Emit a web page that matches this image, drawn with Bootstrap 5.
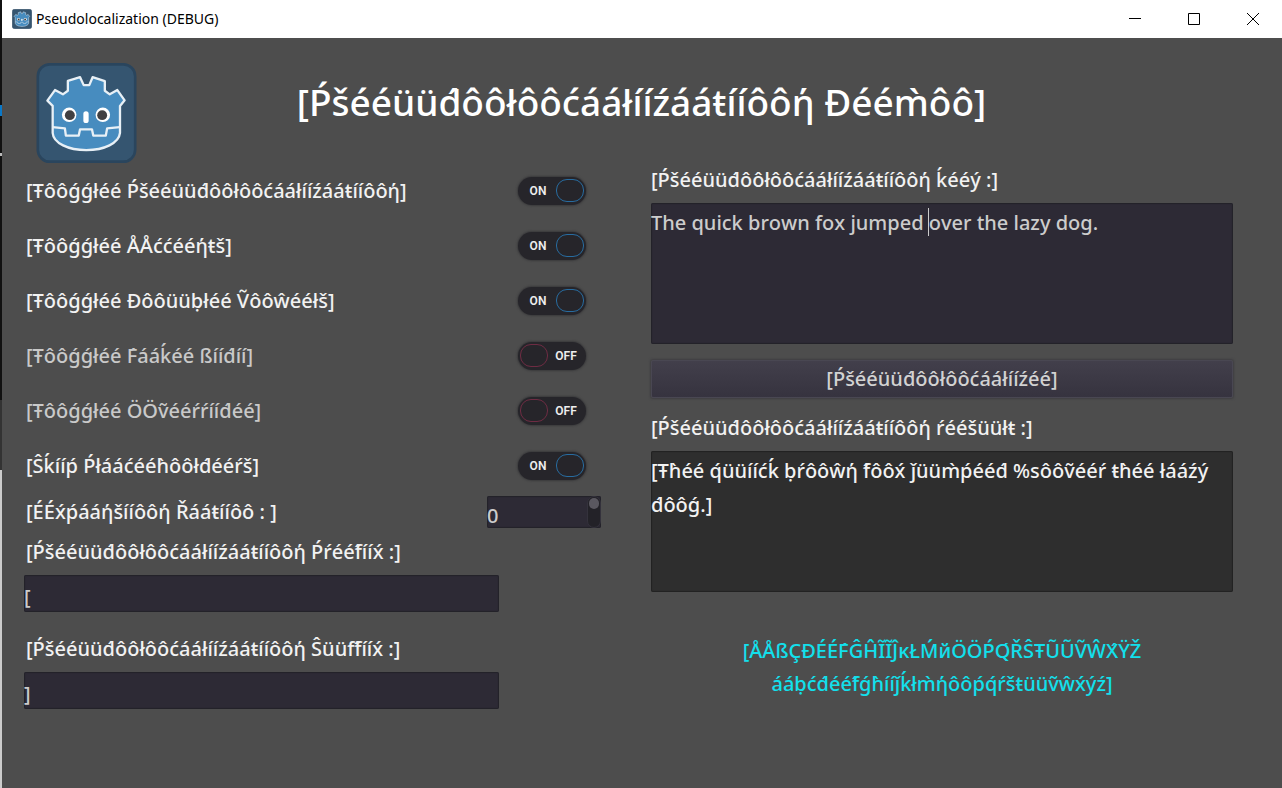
<!DOCTYPE html>
<html lang="en">
<head>
<meta charset="utf-8">
<meta name="viewport" content="width=device-width, initial-scale=1">
<title>Pseudolocalization (DEBUG)</title>
<link href="https://cdn.jsdelivr.net/npm/bootstrap@5.3.0/dist/css/bootstrap.min.css" rel="stylesheet">
<style>
  body {
    font-family: "Noto Sans", sans-serif;
    font-size: 20px;
    line-height: 32px;
    color: #f2f2f2;
    background: #4d4d4d;
  }
  /* sliver of the desktop that shows beside the window */
  .desktop-edge {
    min-height: 100vh;
    padding-left: 2px;
    background: linear-gradient(#111 0 105px, #0a78c8 105px 116px, #111 116px 153px, #bbb 153px 156px, #111 156px 400px, #333 400px 470px, #ccc 470px) left / 2px 100% no-repeat;
  }
  .titlebar { height: 38px; background: #fff; color: #000; font: 14px/20px "Noto Sans", sans-serif; padding-left: 10px; }
  .win-btn { width: 59px; height: 38px; border: 0; background: none; padding: 0; line-height: 0; color: #000; }
  .stage { padding: 25px 49px 0 22px; }
  .masthead { display: grid; grid-template-columns: 100px 1fr 86px; padding: 0 0 0 12px; }
  .masthead h1 { font-size: 37px; line-height: 52px; font-weight: 500; color: #fff; padding-top: 13px; margin: 0; white-space: nowrap; text-align: center; }
  .game, .game input, .game textarea, .game button { font-feature-settings: "mark" 0; font-kerning: none; font-weight: 500; }
  .panes { display: grid; grid-template-columns: minmax(0, 577fr) minmax(0, 582fr); column-gap: 50px; }
  .toggle-row { height: 55px; padding: 0 15px 0 2px; }
  .toggle-row.is-off { color: #c9c9c9; }
  .toggle { display: inline-grid; width: 68px; height: 28px; }
  .toggle > * { grid-area: 1 / 1; }
  .toggle input { appearance: none; margin: 0; border-radius: 14px; background: #26252a; box-shadow: 0 0 2px 1px #39393b; }
  .toggle .face { pointer-events: none; padding: 0 2px; font: 600 12px/16px Roboto, sans-serif; color: #eee; }
  .toggle .state { flex: 1; text-align: center; }
  .toggle .knob { width: 28px; height: 23px; border-radius: 11px; border: 1px solid #6e2c43; }
  .toggle input:checked + .face { flex-direction: row-reverse; }
  .toggle input:checked + .face .knob { border-color: #286ca0; }
  .field { display: block; width: 100%; border: 0; border-radius: 2px; background: #2d2a35; color: #ccc; padding: 0; margin-top: 7px; outline: 0; resize: none; box-shadow: inset 0 0 1px 1px #232229; }
  .line-field { height: 37px; padding-top: 5px; }
  .line-wrap { padding-right: 102px; }
  .prefix-wrap { padding-top: 8px; }
  .suffix-wrap { padding-top: 21px; }
  .ratio-row { padding: 3px 0 0 2px; }
  .cap { display: block; height: 32px; }
  .left-cap { padding-left: 2px; }
  .right-pane { padding-top: 1px; }
  .result-cap { margin-top: 14px; }
  .text-area { height: 141px; padding-top: 3px; line-height: 34px; }
  .result { background: #2e2e2e; color: #f2f2f2; box-shadow: inset 0 0 1px 1px #222; overflow-wrap: break-word; }
  .text-caret { position: absolute; left: 277px; top: 5px; width: 1px; height: 28px; background: #ccc; }
  .spin { width: 114px; height: 32px; display: flex; box-shadow: inset 0 0 1px 1px #232229; background: #2d2a35; border-radius: 2px; }
  .spin input { flex: 1; min-width: 0; border: 0; background: none; color: #ccc; padding: 7px 0 0; outline: 0; }
  .spin-bar { width: 14px; border-radius: 7px; background: #232228; border: 1px solid #34323c; padding: 1px 0; }
  .spin-bar i { display: block; height: 11px; margin: 0 1px; border-radius: 6px; background: #5a5860; }
  .go-btn { height: 38px; border: 1px solid #494752; border-radius: 2px; background: linear-gradient(#423f4b, #36333f); color: #d2d2d2; box-shadow: 0 0 2px 1px #3f3e42; padding: 0; }
  .alphabet { color: #12e0ec; line-height: 33px; white-space: nowrap; margin: 42px 0 0; }
</style>
</head>
<body>
<div class="desktop-edge">
  <header class="titlebar d-flex align-items-center">
    <svg width="20" height="20" viewBox="0 0 303 303" aria-hidden="true"><use href="#robot"/></svg>
    <span class="ms-1 me-auto">Pseudolocalization (DEBUG)</span>
    <button class="win-btn" type="button" aria-label="Minimize"><svg width="12" height="12" stroke="currentColor"><path d="M0 5.5h12"/></svg></button>
    <button class="win-btn" type="button" aria-label="Maximize"><svg width="12" height="12" fill="none" stroke="currentColor"><path d="M.5 .5h11v11h-11z"/></svg></button>
    <button class="win-btn" type="button" aria-label="Close"><svg width="12" height="12" stroke="currentColor"><path d="M0 0l12 12M12 0L0 12"/></svg></button>
  </header>

  <main class="game stage">
    <div class="masthead">
      <svg width="101" height="100" viewBox="0 0 303 303" role="img" aria-label="Godot">
        <g id="robot">
          <rect x="4" y="4" width="295" height="295" rx="36" fill="#355570" stroke="#2a455d" stroke-width="8"/>
          <path d="M33 114L56 82L80 95L95 84V54L132 43L143 67H160L170 43L207 55V84L222 95L245 82L267 113L253 130V212C250 243 205 264 151 264C97 264 51 243 49 212V130Z" fill="#478cbf" stroke="#e8f0f6" stroke-width="7" stroke-linejoin="round"/>
          <path d="M49 194L86 198L89 220H128L132 201H168L172 220H210L214 198L252 194" fill="none" stroke="#e8f0f6" stroke-width="7" stroke-linejoin="round"/>
          <circle cx="99" cy="157" r="22" fill="#fff"/><circle cx="201" cy="157" r="22" fill="#fff"/>
          <circle cx="101" cy="158" r="15" fill="#414042"/><circle cx="199" cy="158" r="15" fill="#414042"/>
          <rect x="142" y="146" width="16" height="36" rx="8" fill="#fff"/>
        </g>
      </svg>
      <h1>[Ṕšééüüd́ôôłôôćááłííźááŧííôôή Ðéém̀ôô]</h1>
    </div>

    <div class="panes">
      <section>
        <label class="toggle-row d-flex align-items-center justify-content-between"><span>[Ŧôôǵǵłéé Ṕšééüüd́ôôłôôćááłííźááŧííôôή]</span><span class="toggle"><input type="checkbox" role="switch" checked><span class="face d-flex align-items-center"><span class="knob"></span><span class="state">ON</span></span></span></label>
        <label class="toggle-row d-flex align-items-center justify-content-between"><span>[Ŧôôǵǵłéé ÅÅććééήŧš]</span><span class="toggle"><input type="checkbox" role="switch" checked><span class="face d-flex align-items-center"><span class="knob"></span><span class="state">ON</span></span></span></label>
        <label class="toggle-row d-flex align-items-center justify-content-between"><span>[Ŧôôǵǵłéé Ðôôüüḅłéé Ṽôôŵééłš]</span><span class="toggle"><input type="checkbox" role="switch" checked><span class="face d-flex align-items-center"><span class="knob"></span><span class="state">ON</span></span></span></label>
        <label class="toggle-row is-off d-flex align-items-center justify-content-between"><span>[Ŧôôǵǵłéé F́ááḱéé ßííd́íí]</span><span class="toggle"><input type="checkbox" role="switch"><span class="face d-flex align-items-center"><span class="knob"></span><span class="state">OFF</span></span></span></label>
        <label class="toggle-row is-off d-flex align-items-center justify-content-between"><span>[Ŧôôǵǵłéé ÖÖṽééŕŕííd́éé]</span><span class="toggle"><input type="checkbox" role="switch"><span class="face d-flex align-items-center"><span class="knob"></span><span class="state">OFF</span></span></span></label>
        <label class="toggle-row d-flex align-items-center justify-content-between"><span>[Ŝḱííṕ Ṕłááćééh̀ôôłd́ééŕš]</span><span class="toggle"><input type="checkbox" role="switch" checked><span class="face d-flex align-items-center"><span class="knob"></span><span class="state">ON</span></span></span></label>

        <div class="ratio-row d-flex justify-content-between">
          <label for="ratio">[ÉÉx́ṕááήšííôôή Řááŧííôô : ]</label>
          <div class="spin"><input id="ratio" type="text" inputmode="decimal" value="0"><span class="spin-bar"><i></i></span></div>
        </div>
        <div class="line-wrap prefix-wrap">
          <label class="cap left-cap" for="prefix">[Ṕšééüüd́ôôłôôćááłííźááŧííôôή Ṕŕééf́ííx́ :]</label>
          <input class="field line-field" id="prefix" type="text" value="[">
        </div>
        <div class="line-wrap suffix-wrap">
          <label class="cap left-cap" for="suffix">[Ṕšééüüd́ôôłôôćááłííźááŧííôôή Ŝüüf́f́ííx́ :]</label>
          <input class="field line-field" id="suffix" type="text" value="]">
        </div>
      </section>

      <section class="right-pane">
        <label class="cap" for="key">[Ṕšééüüd́ôôłôôćááłííźááŧííôôή ḱééý :]</label>
        <div class="position-relative">
          <textarea class="field text-area" id="key">The quick brown fox jumped over the lazy dog.</textarea>
          <span class="text-caret"></span>
        </div>
        <button class="go-btn w-100 mt-3" type="button">[Ṕšééüüd́ôôłôôćááłííźéé]</button>
        <label class="cap result-cap" for="result">[Ṕšééüüd́ôôłôôćááłííźááŧííôôή ŕééšüüłŧ :]</label>
        <textarea class="field text-area result" id="result" readonly>[Ŧh̀éé q́üüííćḱ ḅŕôôŵή f́ôôx́ ǰüüm̀ṕééd́ %sôôṽééŕ ŧh̀éé łááźý d́ôôǵ.]</textarea>
        <p class="alphabet text-center">[ÅÅßÇÐÉÉF́ĜĤĨĨĴĸŁḾйÖÖṔQ́ŘŜŦŨŨṼŴX́ŸŽ<br>ááḅćd́ééf́ǵh̀ííǰḱłm̀ήôôṕq́ŕšŧüüṽŵx́ýź]</p>
      </section>
    </div>
  </main>
</div>
<script src="https://cdn.jsdelivr.net/npm/bootstrap@5.3.0/dist/js/bootstrap.bundle.min.js"></script>
<script>
  document.querySelectorAll('.toggle input').forEach(box => box.addEventListener('change', () => {
    box.parentElement.querySelector('.state').textContent = box.checked ? 'ON' : 'OFF';
    box.closest('.toggle-row').classList.toggle('is-off', !box.checked);
  }));
</script>
</body>
</html>
